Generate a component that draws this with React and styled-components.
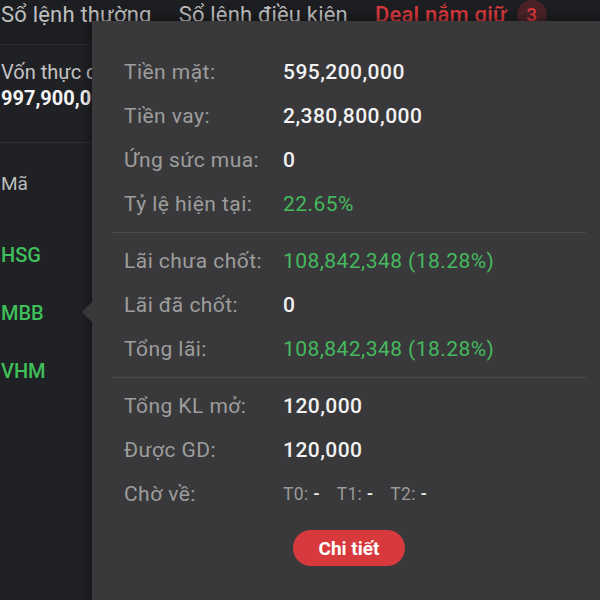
import styled, { createGlobalStyle } from 'styled-components';

const GlobalStyle = createGlobalStyle`
  body {
    margin: 0;
    background: #202124;
    font-family: Roboto, 'Noto Sans', sans-serif;
    overflow: hidden;
  }
`;

const Page = styled.div`
  position: relative;
  width: 600px;
  height: 600px;
  overflow: hidden;
  background: #202124;
`;

const TabBar = styled.div`
  display: flex;
  align-items: flex-start;
  gap: 27px;
  height: 44px;
  padding-left: 1px;
  background: #1d1e21;
  border-bottom: 1px solid #2b2c2f;
`;

const Tab = styled.div`
  font-size: 22px;
  letter-spacing: 0.2px;
  line-height: 30px;
  color: ${(p) => (p.active ? '#d9393d' : '#bfbfbf')};
  font-weight: ${(p) => (p.active ? 500 : 400)};
  display: flex;
  align-items: center;
  gap: 10px;
  white-space: nowrap;
`;

const Badge = styled.span`
  display: inline-flex;
  align-items: center;
  justify-content: center;
  width: 30px;
  height: 30px;
  border-radius: 50%;
  background: #4a2327;
  color: #e0393e;
  font-size: 19px;
  font-weight: 500;
`;

const Summary = styled.div`
  display: flex;
  flex-direction: column;
  gap: 2px;
  padding: 15px 0 32px 1px;
  border-bottom: 1px solid #303134;
  white-space: nowrap;
`;

const SummaryLabel = styled.div`
  font-size: 20px;
  line-height: 24px;
  color: #c4c4c4;
`;

const SummaryValue = styled.div`
  font-size: 20px;
  line-height: 24px;
  font-weight: 700;
  color: #f4f4f4;
`;

const Table = styled.div`
  display: flex;
  flex-direction: column;
  padding-left: 1px;
`;

const HeadCell = styled.div`
  height: 80px;
  margin-bottom: 3px;
  display: flex;
  align-items: center;
  font-size: 19px;
  color: #bdbdbd;
`;

const Ticker = styled.div`
  height: 58px;
  display: flex;
  align-items: center;
  font-size: 20px;
  font-weight: 500;
  color: #3fbf5b;
`;

const Popover = styled.div`
  position: absolute;
  left: 92px;
  top: 21px;
  width: 514px;
  height: 600px;
  box-sizing: border-box;
  padding-top: 29px;
  background: #39393b;
  box-shadow: 0 0 12px rgba(0, 0, 0, 0.55);
  display: flex;
  flex-direction: column;
`;

const Arrow = styled.div`
  position: absolute;
  left: -10px;
  top: 281px;
  width: 0;
  height: 0;
  border-top: 10px solid transparent;
  border-bottom: 10px solid transparent;
  border-right: 10px solid #39393b;
`;

const Row = styled.div`
  display: flex;
  align-items: center;
  height: 44px;
  padding-left: 32px;
  font-size: 21px;
  letter-spacing: 0.45px;
  white-space: nowrap;
`;

const Label = styled.div`
  width: 159px;
  color: #9d9d9d;
`;

const Value = styled.div`
  color: ${(p) => (p.green ? '#45b95d' : '#f2f2f2')};
  font-weight: ${(p) => (p.green ? 400 : 500)};
`;

const Divider = styled.div`
  height: 1px;
  margin: 6px 20px;
  background: #4a4a4d;
`;

const Pending = styled.div`
  display: flex;
  gap: 17px;
  font-size: 17.5px;
  letter-spacing: 0.3px;
  color: #9a9a9a;
`;

const PendingItem = styled.span`
  & b {
    font-weight: 500;
    color: #eeeeee;
    margin-left: 5px;
  }
`;

const Footer = styled.div`
  display: flex;
  justify-content: center;
  margin-top: 14px;
`;

const DetailButton = styled.button`
  height: 36px;
  padding: 0 26px;
  border: none;
  border-radius: 18px;
  background: #d7393d;
  color: #ffffff;
  font-family: Roboto, sans-serif;
  font-size: 19px;
  font-weight: 700;
  cursor: pointer;
`;

const sections = [
  [
    { label: 'Tiền mặt:', value: '595,200,000' },
    { label: 'Tiền vay:', value: '2,380,800,000' },
    { label: 'Ứng sức mua:', value: '0' },
    { label: 'Tỷ lệ hiện tại:', value: '22.65%', green: true },
  ],
  [
    { label: 'Lãi chưa chốt:', value: '108,842,348 (18.28%)', green: true },
    { label: 'Lãi đã chốt:', value: '0' },
    { label: 'Tổng lãi:', value: '108,842,348 (18.28%)', green: true },
  ],
];

const App = () => {
  return (
    <Page>
      <GlobalStyle />
      <TabBar>
        <Tab>Sổ lệnh thường</Tab>
        <Tab>Sổ lệnh điều kiện</Tab>
        <Tab active>
          Deal nắm giữ<Badge>3</Badge>
        </Tab>
      </TabBar>
      <Summary>
        <SummaryLabel>Vốn thực có</SummaryLabel>
        <SummaryValue>997,900,000</SummaryValue>
      </Summary>
      <Table>
        <HeadCell>Mã</HeadCell>
        <Ticker>HSG</Ticker>
        <Ticker>MBB</Ticker>
        <Ticker>VHM</Ticker>
      </Table>

      <Popover>
        <Arrow />
        {sections.map((rows, i) => (
          <div key={i}>
            {rows.map((r) => (
              <Row key={r.label}>
                <Label>{r.label}</Label>
                <Value green={r.green}>{r.value}</Value>
              </Row>
            ))}
            <Divider />
          </div>
        ))}
        <Row>
          <Label>Tổng KL mở:</Label>
          <Value>120,000</Value>
        </Row>
        <Row>
          <Label>Được GD:</Label>
          <Value>120,000</Value>
        </Row>
        <Row>
          <Label>Chờ về:</Label>
          <Pending>
            <PendingItem>T0:<b>-</b></PendingItem>
            <PendingItem>T1:<b>-</b></PendingItem>
            <PendingItem>T2:<b>-</b></PendingItem>
          </Pending>
        </Row>
        <Footer>
          <DetailButton>Chi tiết</DetailButton>
        </Footer>
      </Popover>
    </Page>
  );
};

export default App;
